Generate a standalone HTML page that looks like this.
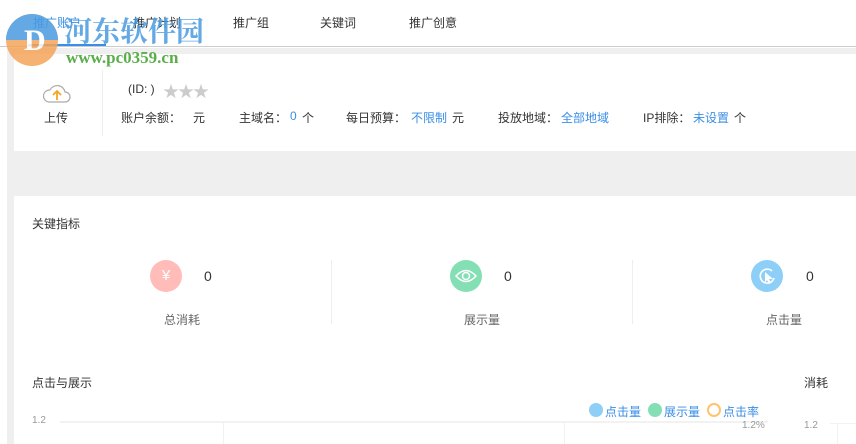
<!DOCTYPE html><html><head><meta charset="utf-8"><style>
*{margin:0;padding:0;box-sizing:border-box}
body{width:856px;height:444px;overflow:hidden;background:#fff;font-family:"Liberation Sans","Noto Sans CJK SC",sans-serif;font-size:12px;color:#333;position:relative}
.a{position:absolute;white-space:nowrap}
.b{color:#3a8ee6}
.g{color:#999}
</style></head><body>
<div class="a" style="left:0;top:0;width:856px;height:47px;background:#fff;border-bottom:1px solid #ccc"></div>
<div class="a" style="left:33px;top:14px;color:#3a8ee6">推广账户</div>
<div class="a" style="left:28px;top:44px;width:78px;height:2px;background:#3a8ee6"></div>
<div class="a" style="left:133px;top:14px">推广计划</div>
<div class="a" style="left:233px;top:14px">推广组</div>
<div class="a" style="left:320px;top:14px">关键词</div>
<div class="a" style="left:409px;top:14px">推广创意</div>
<div class="a" style="left:7px;top:48px;width:849px;height:396px;background:#efefef"></div>
<div class="a" style="left:14px;top:54px;width:842px;height:97px;background:#fff"></div>
<div class="a" style="left:14px;top:196px;width:842px;height:248px;background:#fff"></div>
<svg class="a" style="left:4px;top:10px;opacity:.85" width="60" height="58" viewBox="0 0 60 58"><circle cx="28" cy="30" r="26" fill="#f5a55a"/><path d="M2 30a26 26 0 0 1 52 0z" fill="#4a9be0"/><text x="20" y="40" font-size="30" font-weight="bold" fill="#fff" font-family="Liberation Serif">D</text></svg>
<div class="a" style="left:64px;top:10px;font-size:28px;font-weight:bold;color:#4a9be0;font-family:'Liberation Serif','Noto Serif CJK SC',serif;opacity:.85">河东软件园</div>
<div class="a" style="left:66px;top:48px;font-size:17px;font-weight:bold;color:#5aae4a;font-family:'Liberation Serif',serif">www.pc0359.cn</div>
<svg class="a" style="left:43px;top:82px" width="28" height="22" viewBox="0 0 28 22"><path d="M6 20h16a5 5 0 0 0 0-10 8 8 0 0 0-15-2 6 6 0 0 0-1 12z" fill="#fff" stroke="#aaa" stroke-width="1.2"/><path d="M14 18V9M10 13l4-4 4 4" stroke="#f5a623" stroke-width="1.8" fill="none"/></svg>
<div class="a" style="left:44px;top:109px">上传</div>
<div class="a" style="left:102px;top:70px;width:1px;height:66px;background:#eee"></div>
<div class="a" style="left:128px;top:82px">(ID: )</div>
<div class="a" style="left:163px;top:78px;color:#ccc;font-size:16px;letter-spacing:-1px">★★★</div>
<div class="a" style="left:121px;top:109px">账户余额：</div>
<div class="a" style="left:193px;top:109px">元</div>
<div class="a" style="left:239px;top:109px">主域名：</div>
<div class="a b" style="left:290px;top:109px">0</div>
<div class="a" style="left:302px;top:109px">个</div>
<div class="a" style="left:346px;top:109px">每日预算：</div>
<div class="a b" style="left:411px;top:109px">不限制</div>
<div class="a" style="left:452px;top:109px">元</div>
<div class="a" style="left:498px;top:109px">投放地域：</div>
<div class="a b" style="left:561px;top:109px">全部地域</div>
<div class="a" style="left:643px;top:109px">IP排除：</div>
<div class="a b" style="left:693px;top:109px">未设置</div>
<div class="a" style="left:734px;top:109px">个</div>
<div class="a" style="left:32px;top:215px">关键指标</div>
<div class="a" style="left:150px;top:260px;width:32px;height:32px;border-radius:50%;background:#ffbcb8;color:#fff;text-align:center;line-height:32px;font-size:15px">¥</div>
<div class="a" style="left:204px;top:268px;font-size:14px">0</div>
<div class="a" style="left:164px;top:311px;color:#666">总消耗</div>
<div class="a" style="left:331px;top:260px;width:1px;height:64px;background:#eee"></div>
<svg class="a" style="left:450px;top:260px" width="32" height="32"><circle cx="16" cy="16" r="16" fill="#84e0b4"/><path d="M6 16q10-11 20 0q-10 11-20 0z" fill="none" stroke="#fff" stroke-width="1.5"/><circle cx="16" cy="16" r="3.5" fill="none" stroke="#fff" stroke-width="1.5"/></svg>
<div class="a" style="left:504px;top:268px;font-size:14px">0</div>
<div class="a" style="left:464px;top:311px;color:#666">展示量</div>
<div class="a" style="left:632px;top:260px;width:1px;height:64px;background:#eee"></div>
<svg class="a" style="left:751px;top:260px" width="32" height="32"><circle cx="16" cy="16" r="16" fill="#8ecff7"/><path d="M21 11a7 7 0 1 0 2 7" fill="none" stroke="#fff" stroke-width="1.6"/><path d="M14 12l8 7-4 0 2 4-2 1-2-4-2 3z" fill="#fff"/></svg>
<div class="a" style="left:806px;top:268px;font-size:14px">0</div>
<div class="a" style="left:766px;top:311px;color:#666">点击量</div>
<div class="a" style="left:32px;top:374px">点击与展示</div>
<div class="a" style="left:804px;top:374px">消耗</div>
<div class="a" style="left:589px;top:403px;width:14px;height:14px;border-radius:50%;background:#8ecff7"></div>
<div class="a b" style="left:605px;top:403px">点击量</div>
<div class="a" style="left:648px;top:403px;width:14px;height:14px;border-radius:50%;background:#84e0b4"></div>
<div class="a b" style="left:664px;top:403px">展示量</div>
<div class="a" style="left:707px;top:403px;width:14px;height:14px;border-radius:50%;border:2px solid #ffc36b"></div>
<div class="a b" style="left:723px;top:403px">点击率</div>
<div class="a g" style="left:32px;top:415px;font-size:10px">1.2</div>
<div class="a" style="left:60px;top:421px;width:708px;height:2px;background:#f2f2f2"></div>
<div class="a g" style="left:742px;top:420px;font-size:10px">1.2%</div>
<div class="a g" style="left:804px;top:420px;font-size:10px">1.2</div>
<div class="a" style="left:830px;top:423px;width:26px;height:1px;background:#f2f2f2"></div>
<div class="a" style="left:223px;top:423px;width:1px;height:21px;background:#f2f2f2"></div>
<div class="a" style="left:564px;top:423px;width:1px;height:21px;background:#f2f2f2"></div>
<div class="a" style="left:837px;top:423px;width:1px;height:21px;background:#f2f2f2"></div>
</body></html>
